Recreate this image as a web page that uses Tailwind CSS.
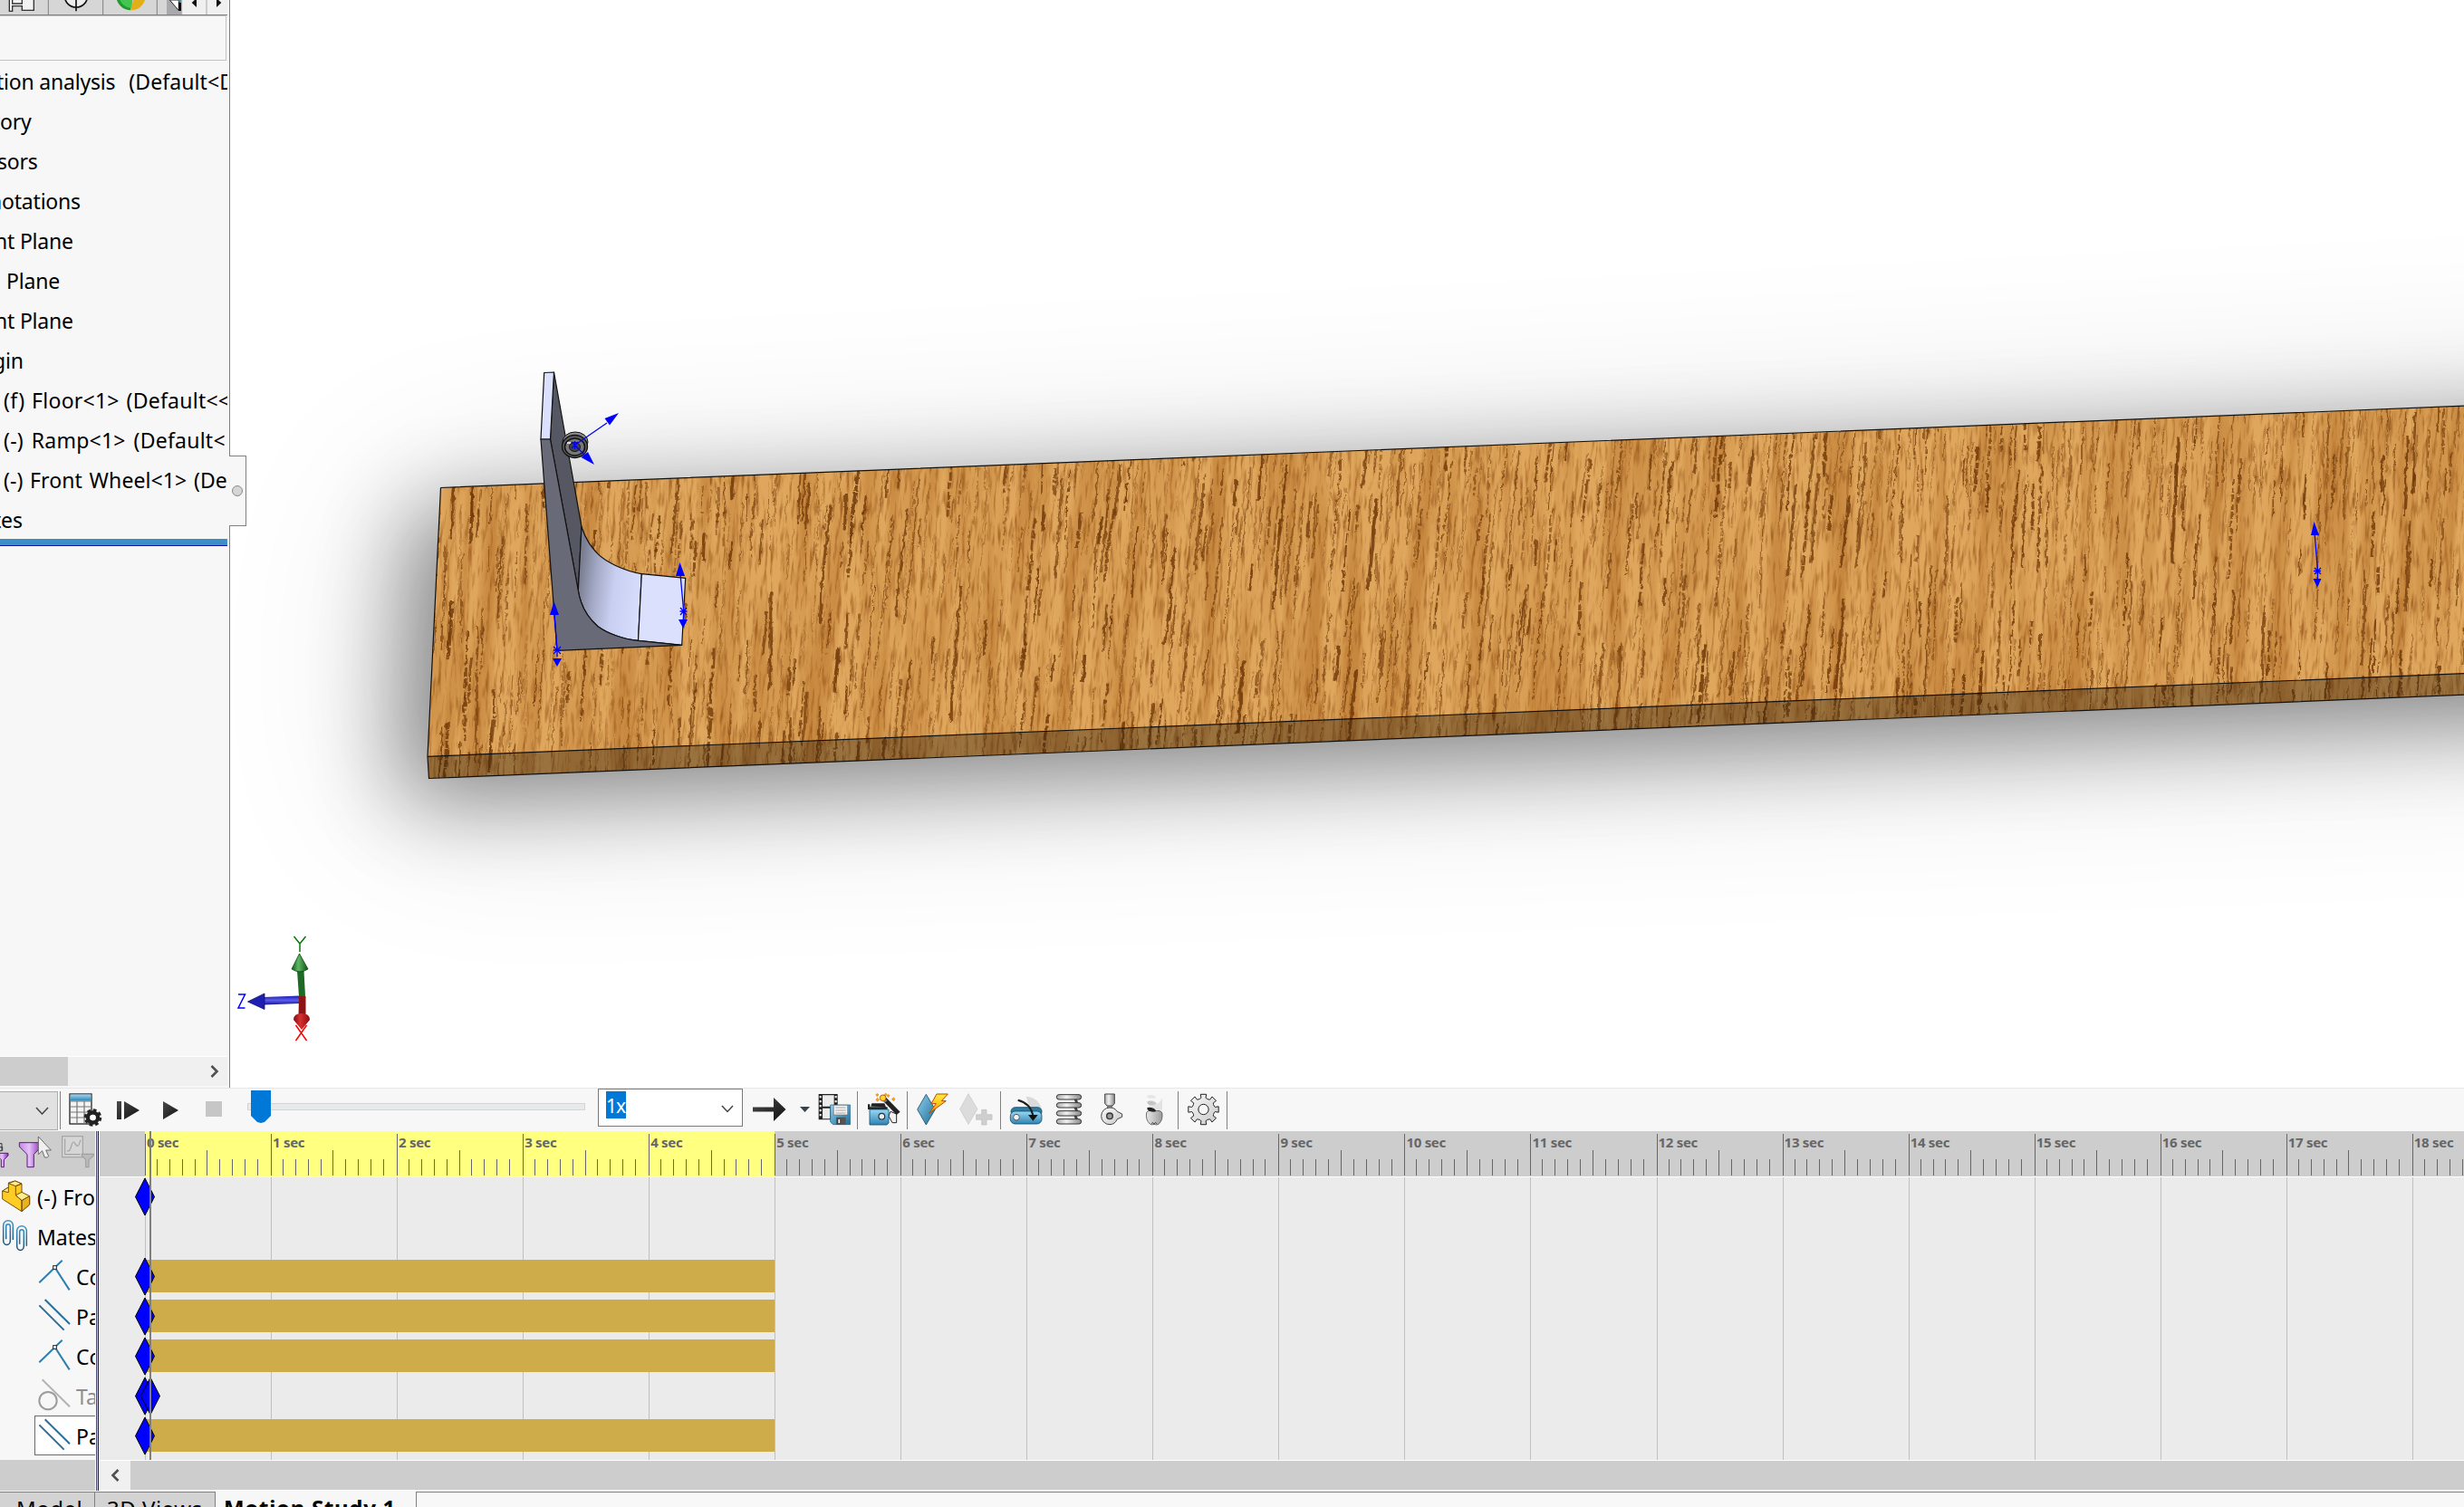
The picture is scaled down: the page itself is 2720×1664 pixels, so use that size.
<!DOCTYPE html>
<html lang="en">
<head>
<meta charset="utf-8">
<title>Motion Study</title>
<script src="https://cdn.jsdelivr.net/npm/@tailwindcss/browser@4"></script>
</head>
<body class="w-[2720px] h-[1664px] overflow-hidden bg-[#f7f7f7] text-black text-[24px] font-['Noto_Sans','Open_Sans',sans-serif] flex flex-col">

<!-- shared gradients -->
<svg class="absolute w-0 h-0" aria-hidden="true">
  <defs>
    <linearGradient id="gBlue" x1="0" y1="0" x2="1" y2="1"><stop offset="0" stop-color="#8fd0ee"/><stop offset="1" stop-color="#1f6d96"/></linearGradient>
    <linearGradient id="gBlueV" x1="0" y1="0" x2="0" y2="1"><stop offset="0" stop-color="#9ad8f4"/><stop offset="1" stop-color="#2d83b4"/></linearGradient>
    <linearGradient id="gDark" x1="0" y1="0" x2="1" y2="1"><stop offset="0" stop-color="#4a4a4a"/><stop offset="1" stop-color="#111"/></linearGradient>
    <linearGradient id="gMetal" x1="0" y1="0" x2="1" y2="0"><stop offset="0" stop-color="#aaa"/><stop offset=".4" stop-color="#f0f0f0"/><stop offset="1" stop-color="#888"/></linearGradient>
    <linearGradient id="gGear" x1="0" y1="0" x2="1" y2="1"><stop offset="0" stop-color="#fafafa"/><stop offset="1" stop-color="#c8c8c8"/></linearGradient>
    <linearGradient id="gPurple" x1="0" y1="0" x2="1" y2="0"><stop offset="0" stop-color="#c489e6"/><stop offset=".45" stop-color="#e6c2f7"/><stop offset="1" stop-color="#8a2fb4"/></linearGradient>
    <linearGradient id="gBolt" x1="0" y1="0" x2="0" y2="1"><stop offset="0" stop-color="#ffef3a"/><stop offset="1" stop-color="#ff9d00"/></linearGradient>
    <linearGradient id="gMate" x1="0" y1="0" x2="0" y2="1"><stop offset="0" stop-color="#3c95c6"/><stop offset="1" stop-color="#1f5173"/></linearGradient>
    <linearGradient id="gApple" x1="0" y1="0" x2="1" y2="0"><stop offset="0" stop-color="#e8e8e8"/><stop offset="1" stop-color="#9a9a9a"/></linearGradient>
  </defs>
</svg>

<!-- upper area -->
<div class="flex h-[1201px] shrink-0">
  <aside class="w-[254px] shrink-0 border-r border-[#808080] flex flex-col">
    <div class="h-[17px] w-[251px] shrink-0 overflow-hidden border-b border-[#808080] bg-[#d6d6d6]">
      <svg class="block" width="251" height="16" viewBox="0 0 753 48">
        <path d="M160 0V48M341 0V48M520 0V48" stroke="#808080" stroke-width="3"/>
        <path d="M31 -5V37H41V20H73V34H112V-5M41 -5V12H73V-5" fill="#f2f2f2" stroke="#333" stroke-width="4"/>
        <circle cx="252" cy="-14" r="38" fill="#eee" stroke="#111" stroke-width="5"/><path d="M252 -10V37" stroke="#111" stroke-width="5"/>
        <path d="M433 -15L385 -15A48 48 0 0 0 433 34Z" fill="#1f9a2e"/><path d="M445 -15L433 34A48 48 0 0 0 482 -15Z" fill="#e3ae17"/>
        <path d="M395 -15A40 40 0 0 0 436 26L440 -10Z" fill="#43c650"/>
        <rect x="552" y="0" width="48" height="48" fill="#a9a9ad"/><path d="M562 0L592 35V0Z" fill="#fff" stroke="#222" stroke-width="3"/><rect x="591" y="8" width="9" height="28" fill="#111"/><path d="M592 0h8v5h-8z" fill="#29a"/>
        <rect x="601" y="0" width="152" height="48" fill="#f0f0f0"/><path d="M602 0V48M684 0V48" stroke="#aaa" stroke-width="3"/>
        <path d="M635 9L651 -6V24ZM733 9L717 -6V24Z" fill="#111"/>
      </svg>
    </div>
    <div class="h-[50px] w-[250px] shrink-0 border-r border-b border-t border-[#c3c3c3]"></div>
    <ul class="w-[251px] h-[528px] shrink-0 overflow-hidden whitespace-nowrap text-[23px] leading-[46px] tracking-[-0.2px]">
      <li class="h-[44px] -ml-[4px]">tion analysis&nbsp;<span class="ml-[3px] tracking-[0.1px]">&nbsp;(Default&lt;Display</span></li>
      <li class="h-[44px] -ml-[8px]">tory</li>
      <li class="h-[44px] -ml-[3px]">sors</li>
      <li class="h-[44px] -ml-[12px]">notations</li>
      <li class="h-[44px] -ml-[6px]">nt Plane</li>
      <li class="h-[44px] ml-[7px]">Plane</li>
      <li class="h-[44px] -ml-[6px]">nt Plane</li>
      <li class="h-[44px] -ml-[8px]">gin</li>
      <li class="h-[44px] ml-[4px] tracking-[0.25px] [word-spacing:1.5px]">(f) Floor&lt;1&gt; (Default&lt;&lt;Default</li>
      <li class="h-[44px] ml-[4px] tracking-[0.25px] [word-spacing:2.5px]">(-) Ramp&lt;1&gt; (Default&lt;</li>
      <li class="h-[44px] ml-[4px] tracking-[0.1px] [word-spacing:1.5px]">(-) Front Wheel&lt;1&gt; (Default</li>
      <li class="h-[44px] -ml-[7px]">tes</li>
    </ul>
    <div class="h-[8px] w-[251px] shrink-0 bg-[#3a8fc8] border-b border-[#1414a0]"></div>
    <div class="mt-auto mb-[2px] h-[33px] w-[251px] shrink-0 bg-[#f0f0f0] border-t border-white flex items-center justify-between">
      <div class="h-full w-[75px] bg-[#cdcdcd]"></div>
      <svg class="mr-[9px]" width="10" height="14" viewBox="0 0 10 14"><path d="M1.5 1L7.5 7L1.5 13" fill="none" stroke="#505050" stroke-width="2.6"/></svg>
    </div>
  </aside>

  <main class="relative flex-1 bg-white">
    <svg class="block" width="2466" height="1201" viewBox="254 0 2466 1201">
      <defs>
        <filter id="blur1" filterUnits="userSpaceOnUse" x="0" y="0" width="3200" height="1201"><feGaussianBlur stdDeviation="50"/></filter>
        <filter id="blur2" filterUnits="userSpaceOnUse" x="0" y="0" width="3200" height="1201"><feGaussianBlur stdDeviation="100"/></filter>
        <filter id="bands" filterUnits="userSpaceOnUse" x="340" y="420" width="2490" height="460" color-interpolation-filters="sRGB">
          <feTurbulence type="fractalNoise" baseFrequency="0.045 0.003" numOctaves="3" seed="7"/>
          <feColorMatrix values="0 0 0 0 .7  0 0 0 0 .43  0 0 0 0 .15  3 0 0 0 -1.2"/>
        </filter>
        <filter id="fine" filterUnits="userSpaceOnUse" x="340" y="420" width="2490" height="460" color-interpolation-filters="sRGB">
          <feTurbulence type="fractalNoise" baseFrequency="0.3 0.035" numOctaves="3" seed="21"/>
          <feColorMatrix values="0 0 0 0 .58  0 0 0 0 .32  0 0 0 0 .09  3 0 0 0 -1.5"/>
        </filter>
        <filter id="rough" filterUnits="userSpaceOnUse" x="440" y="420" width="2290" height="460" color-interpolation-filters="sRGB">
          <feTurbulence type="fractalNoise" baseFrequency="0.2 0.12" numOctaves="2" seed="3"/>
          <feDisplacementMap in="SourceGraphic" scale="5" xChannelSelector="R" yChannelSelector="G"/>
        </filter>
        <clipPath id="board"><path d="M486.5 538.5L2725 448V767L473.5 859.5L472 835.3Z"/></clipPath>
        <linearGradient id="curve" gradientUnits="userSpaceOnUse" x1="638" y1="655" x2="708" y2="664"><stop offset="0" stop-color="#7b7f93"/><stop offset=".25" stop-color="#a4aac6"/><stop offset=".55" stop-color="#c8cff0"/><stop offset="1" stop-color="#d8defe"/></linearGradient>
        <linearGradient id="zAx" x1="0" y1="0" x2="0" y2="1"><stop offset="0" stop-color="#1c1caa"/><stop offset=".5" stop-color="#5b5bf0"/><stop offset="1" stop-color="#14148c"/></linearGradient>
        <linearGradient id="yAx" x1="0" y1="0" x2="1" y2="0"><stop offset="0" stop-color="#0f5a14"/><stop offset=".4" stop-color="#5fb866"/><stop offset="1" stop-color="#0e5213"/></linearGradient>
        <linearGradient id="xAx" x1="0" y1="0" x2="1" y2="0"><stop offset="0" stop-color="#7a1010"/><stop offset=".4" stop-color="#d93030"/><stop offset="1" stop-color="#8c0f0f"/></linearGradient>
      </defs>
      <path d="M440 545L3100 420V800L425 895Z" fill="#000" opacity=".12" filter="url(#blur2)"/>
      <path d="M456 564L3100 456V780L440 885Z" fill="#000" opacity=".43" filter="url(#blur1)"/>
      <g clip-path="url(#board)">
        <rect x="440" y="420" width="2290" height="460" fill="#dfa75d"/>
        <g transform="translate(30 0) skewX(-3)">
          <rect x="340" y="420" width="2490" height="460" filter="url(#bands)" opacity=".55"/>
          <rect x="340" y="420" width="2490" height="460" filter="url(#fine)" opacity=".7"/>
        </g>
        <g id="grain" fill="none" stroke="#6f3808" stroke-linecap="butt" filter="url(#rough)"></g>
        <path d="M472 835.3L2725 743.5V767L473.5 859.5Z" fill="#2a1c0c" opacity=".38"/>
      </g>
      <path d="M486.5 538.5L2725 448M2725 767L473.5 859.5L472 835.3L486.5 538.5M472 835.3L2725 743.5" fill="none" stroke="#111" stroke-width="1.2"/>

      <g stroke="#111" stroke-width="1.2" stroke-linejoin="round">
        <path d="M611.5 411L642 581.7L638.3 652L607.5 485Z" fill="#555863"/>
        <path d="M600.7 411.5L611.5 411L607.5 485L597 485Z" fill="#dbe1fd"/>
        <path d="M642 581.7C647 597 653 604 660 611.7C668 620 688 630 708.3 633.7L704.5 707.3C688 706 670 699 660 691.7C650 683 641 670 638.3 652Z" fill="url(#curve)"/>
        <path d="M708.3 633.7L756.7 638.3L752.7 712.3L704.5 707.3Z" fill="#dbe1fd"/>
        <path d="M597 485H607.5L638.3 652C641 670 650 683 660 691.7C670 699 688 706 704.5 707.3L752.7 712.3L615 718.3Z" fill="#686a78"/>
      </g>
      <g>
        <ellipse cx="635" cy="488" rx="14" ry="11" fill="#8b8b8b" stroke="#111"/>
        <ellipse cx="634.5" cy="493" rx="14" ry="12.5" fill="#5c5c5c" stroke="#111" stroke-width="1.3"/>
        <ellipse cx="634.5" cy="493.5" rx="11" ry="9.5" fill="#777" stroke="#111" stroke-width="1.5"/>
        <ellipse cx="634.5" cy="493.5" rx="6" ry="5" fill="#444" stroke="#111"/>
        <path d="M626 489h4" stroke="#fff" stroke-width="1.5"/>
      </g>
      <g stroke="#00f" fill="#00f" stroke-width="1.3">
        <path d="M634.5 491.5L670 467M634.5 491.5L648 505" fill="none"/>
        <path d="M683 456L667.5 462L673 469.5Z M656 513L641.5 505L649 499Z" stroke="none"/>
        <path d="M615 718L612 678M615 718V725M754.7 675L751 634M754.7 675V684M2558.5 630L2555 588M2558.5 630V640" fill="none"/>
        <path d="M611.5 664L607 679H617ZM610 727H620L615 736ZM750.5 621L746 636H756ZM749 684H759L754 693.5ZM2554.5 576L2551 591H2560ZM2553.500 639H2562.500L2558 648.500Z" stroke="none"/>
        <path d="M611 714l8 8M619 714l-8 8M611 718h8M631 488l7 7M638 488l-7 7M634.500 487v9M751 671l7 8M758 671l-7 8M750.500 675h8M2555 627l7 7M2562 627l-7 7M2554 630.500h8" fill="none"/>
      </g>

      <!-- orientation triad -->
      <path d="M291 1101L331 1099.500V1108L291 1109.500Z" fill="url(#zAx)"/>
      <path d="M273.500 1106L292 1097V1114.500Z" fill="#1f1fb4" stroke="#10106e" stroke-width=".8"/>
      <path d="M328 1072H335.500L337 1100H330Z" fill="#1d6a24"/>
      <path d="M330.500 1053L340 1070Q331 1076 322 1070Z" fill="url(#yAx)" stroke="#0b4410" stroke-width=".8"/>
      <path d="M330 1100H337.500V1122H329.500Z" fill="#8b1414"/>
      <path d="M324 1126Q324 1119 333 1119Q342 1119 342 1126L333 1137Z" fill="url(#xAx)"/>
      <path d="M324.500 1034L331 1042L337.500 1034M331 1042V1051" stroke="#0a7a0a" fill="none" stroke-width="1.500"/>
      <path d="M263 1098H270.500L263 1113H270.500" stroke="#00f" fill="none" stroke-width="1.500"/>
      <path d="M326.500 1132L338.500 1149M338.500 1132L326.500 1149" stroke="#f00" fill="none" stroke-width="1.500"/>
    </svg>
    <div class="absolute left-[-1px] top-[503px] w-[19px] h-[78px] bg-[#f7f7f7] border border-l-0 border-[#808080] flex items-center justify-center">
      <div class="w-[12px] h-[12px] rounded-full border border-[#8a8a8a] bg-[#d6d6d6]"></div>
    </div>
  </main>
</div>

<!-- motion toolbar -->
<div class="h-[48px] shrink-0 border-t border-[#e6e6f2] flex items-start">
  <div class="mt-[3px] w-[64px] h-[43px] bg-[#e1e1e1] border border-l-0 border-[#adadad] flex items-center justify-end pr-[9px]">
    <svg width="15" height="9" viewBox="0 0 15 9"><path d="M1 1L7.500 8L14 1" fill="none" stroke="#444" stroke-width="1.500"/></svg>
  </div>
  <div class="mt-[3px] ml-[2px] w-px h-[42px] bg-[#808080]"></div>
  <svg class="mt-[5px] ml-[9px]" width="38" height="38" viewBox="0 0 38 38">
    <rect x="1" y="1" width="24" height="33" fill="#f4f4f4" stroke="#222" stroke-width="1.300"/><rect x="1.500" y="1.500" width="23" height="7" fill="url(#gBlueV)"/>
    <path d="M1 9H25M1 15H25M1 21H25M1 27H25M9 9V34M17 9V34" stroke="#777" stroke-width="1.200"/>
    <circle cx="26.500" cy="27" r="5.500" fill="none" stroke="#222" stroke-width="4.500"/><circle cx="26.500" cy="27" r="8" fill="none" stroke="#222" stroke-width="3.500" stroke-dasharray="3.600 2.680"/><circle cx="26.500" cy="27" r="3.200" fill="#fff"/>
  </svg>
  <svg class="mt-[13px] ml-[15px]" width="26" height="22" viewBox="0 0 26 22"><path d="M0 1H5V21H0ZM8 1L25 11L8 21Z" fill="url(#gDark)"/></svg>
  <svg class="mt-[13px] ml-[25px]" width="18" height="22" viewBox="0 0 18 22"><path d="M0 1L17 11L0 21Z" fill="url(#gDark)"/></svg>
  <div class="mt-[14px] ml-[29px] w-[18px] h-[17px] bg-[#c6c6c6]"></div>
  <div class="relative mt-[16px] ml-[28px] w-[373px] h-[8px] border border-[#d3d5d5] bg-[#e7eaea]">
    <svg class="absolute left-[3px] -top-[15px]" width="23" height="37" viewBox="0 0 23 37"><path d="M0 0H22V28L15 35L11 36L7 35L0 28Z" fill="#0078d7"/></svg>
  </div>
  <div class="ml-[14px] w-[160px] h-[42px] bg-white border border-[#7a7a7a] flex items-start pl-[8px] pr-[9px] pt-[2px]">
    <span class="bg-[#0078d7] text-white w-[22px] h-[30px] leading-[32px] text-[21px] tracking-[-1px]">1x</span>
    <svg class="ml-auto mt-[15px]" width="14" height="9" viewBox="0 0 14 9"><path d="M1 1L7 7.500L13 1" fill="none" stroke="#444" stroke-width="1.500"/></svg>
  </div>
  <svg class="mt-[10px] ml-[11px]" width="37" height="26" viewBox="0 0 37 26"><path d="M0 10.500H23V0L36.500 13L23 26V15.500H0Z" fill="url(#gDark)"/></svg>
  <svg class="mt-[20px] ml-[15px]" width="11" height="6" viewBox="0 0 11 6"><path d="M0 0H11L5.500 6Z" fill="#37424a"/></svg>
  <svg class="mt-[5px] ml-[9px]" width="36" height="36" viewBox="190 34 108 108">
    <path d="M192 37H255V80H232V122H192Z" fill="#222"/><path d="M205 41H243V78H205ZM205 84H230V119H205Z" fill="#ececec"/><path d="M195 43h6v7h-6zM195 58h6v7h-6zM195 73h6v7h-6zM195 88h6v7h-6zM195 103h6v7h-6zM246 43h6v7h-6zM246 58h6v7h-6z" fill="#fff"/>
    <path d="M231 73H297V138H240L231 130Z" fill="url(#gBlue)" stroke="#1f5d80" stroke-width="2"/><path d="M242 74H288V106H242Z" fill="#f4f4f4" stroke="#555" stroke-width="1.500"/><path d="M248 82H282M248 91H282M248 100H282" stroke="#999" stroke-width="2.500"/><path d="M250 114H282V139H250Z" fill="#555"/><path d="M256 119H264V135H256Z" fill="#fff" stroke="#111" stroke-width="2"/>
  </svg>
  <div class="mt-[3px] ml-[7px] w-px h-[42px] bg-[#808080]"></div>
  <svg class="mt-[5px] ml-[10px]" width="37" height="36" viewBox="352 34 111 108">
    <path d="M355 71H362V80H420V88H355ZM365 78L368 68H410L415 80Z" fill="#222"/><path d="M430 95L450 103V132H436L424 110Z" fill="#f2f2f2" stroke="#222" stroke-width="3"/>
    <path d="M361 88H424V133L418 139H361Z" fill="url(#gBlueV)" stroke="#14506f" stroke-width="2.500"/><circle cx="401" cy="111" r="10" fill="#eee" stroke="#234" stroke-width="3.500"/>
    <path d="M398 52L410 43L462 96L450 106Z" fill="#222"/><path d="M402 55L410 49L420 59L411 66Z" fill="#777"/>
    <circle cx="405" cy="50" r="10" fill="#ffd92a" stroke="#d84b0e" stroke-width="3"/>
    <path d="M386 35l5 5-5 5-5-5zM414 34l5 5-5 5-5-5zM423 38l5 5-5 5-5-5zM440 48l6 6-6 6-6-6zM387 50l6 6-6 6-6-6z" fill="#f8a21a" stroke="#c1530e"/>
  </svg>
  <div class="mt-[3px] ml-[7px] w-px h-[42px] bg-[#808080]"></div>
  <svg class="mt-[5px] ml-[10px]" width="36" height="36" viewBox="518 33 108 108">
    <path d="M549 37L579 87L549 138L520 87Z" fill="url(#gBlue)" stroke="#1b4f6c" stroke-width="2.500"/>
    <path d="M584 36H621L600 59H615L559 100L582 68H566Z" fill="url(#gBolt)" stroke="#b8450c" stroke-width="3"/>
  </svg>
  <svg class="mt-[5px] ml-[11px]" width="37" height="36" viewBox="659 33 111 108">
    <path d="M689 35L719 86L689 136L661 86Z" fill="#dcdcdc" stroke="#c6c6c6" stroke-width="2"/>
    <path d="M733 88H749V104H767V121H749V138H733V121H715V104H733Z" fill="#cfcfcf" stroke="#bdbdbd" stroke-width="2"/>
  </svg>
  <div class="mt-[3px] ml-[8px] w-px h-[42px] bg-[#808080]"></div>
  <svg class="mt-[5px] ml-[9px]" width="37" height="36" viewBox="824 34 111 108">
    <path d="M880 45A55 55 0 0 1 933 110L900 110Z" fill="#dadada"/>
    <rect x="830" y="81" width="102" height="28" rx="14" fill="#2d7ba5" stroke="#174b69" stroke-width="2.500"/>
    <rect x="828" y="94" width="104" height="42" rx="16" fill="url(#gBlueV)" stroke="#174b69" stroke-width="2.500"/>
    <circle cx="848" cy="114" r="10" fill="#f4f4f4" stroke="#555" stroke-width="3"/>
    <path d="M853 57Q895 68 903 108" fill="none" stroke="#1c1c1c" stroke-width="6"/><path d="M887 106H919L903 126Z" fill="#111"/>
  </svg>
  <svg class="mt-[5px] ml-[14px]" width="30" height="36" viewBox="975 34 90 108">
    <path d="M1040 50L1046 66M1040 78L1046 94M1040 105L1046 122" stroke="#444" stroke-width="9"/>
    <g fill="url(#gMetal)" stroke="#333" stroke-width="3"><rect x="979" y="39" width="82" height="16" rx="8"/><rect x="979" y="66" width="82" height="16" rx="8"/><rect x="979" y="93" width="82" height="16" rx="8"/><rect x="979" y="120" width="82" height="16" rx="8"/></g>
  </svg>
  <svg class="mt-[5px] ml-[19px]" width="26" height="36" viewBox="1122 34 78 108">
    <path d="M1148 70H1162V88H1148Z" fill="#999" stroke="#444" stroke-width="2"/><path d="M1139 37H1171V68L1164 76H1146L1139 68Z" fill="url(#gMetal)" stroke="#444" stroke-width="3"/>
    <path d="M1155 82Q1172 82 1180 95L1196 103V113L1180 120Q1172 138 1155 138A28 28 0 0 1 1155 82Z" fill="url(#gGear)" stroke="#444" stroke-width="3"/><circle cx="1155" cy="110" r="10" fill="#999" stroke="#333" stroke-width="4"/>
  </svg>
  <svg class="mt-[5px] ml-[23px]" width="22" height="36" viewBox="1268 34 66 108">
    <path d="M1278 42Q1300 36 1308 50Q1290 54 1278 48Z" fill="#e6e6e6"/><path d="M1280 60Q1300 54 1312 70Q1325 60 1328 50V90H1290Z" fill="#e2e2e2"/><path d="M1278 62Q1298 56 1308 70Q1290 78 1280 70Z" fill="#c4c4c4"/>
    <path d="M1276 98Q1284 88 1301 95Q1318 88 1327 98Q1332 122 1316 137Q1308 141 1301 137Q1293 141 1287 136Q1272 122 1276 98Z" fill="url(#gApple)" stroke="#555" stroke-width="2.500"/><path d="M1278 82Q1298 78 1308 93Q1290 100 1279 89Z" fill="#222"/>
    <path d="M1293 136l3-5 5 5 5-5 4 5" stroke="#333" stroke-width="2.500" fill="none"/>
  </svg>
  <div class="mt-[3px] ml-[15px] w-px h-[42px] bg-[#808080]"></div>
  <svg class="mt-[5px] ml-[9px]" width="37" height="37" viewBox="-55.500 -54 111 111">
    <path id="gear" fill="url(#gGear)" stroke="#222" stroke-width="3" stroke-linejoin="round"/>
    <circle r="17" fill="#f7f7f7" stroke="#222" stroke-width="3"/>
  </svg>
  <div class="mt-[3px] ml-[7px] w-px h-[42px] bg-[#808080]"></div>
</div>

<!-- timeline -->
<div class="flex h-[397px] shrink-0">
  <div class="w-[105px] shrink-0 flex flex-col overflow-hidden">
    <div class="h-[50px] shrink-0 bg-[#cdcdcd]">
      <svg class="block" width="105" height="50" viewBox="0 27 315 150">
        <path d="M-10 100H27V108L13 122V146H4V122L-10 108Z" fill="url(#gPurple)" stroke="#5d1880" stroke-width="3"/><path d="M0 68H6V92H0M0 80H8V92" fill="none" stroke="#333" stroke-width="3"/>
        <path d="M64 65H137V78L112 104V146H90V104L64 78Z" fill="url(#gPurple)" stroke="#5d1880" stroke-width="3"/>
        <path d="M127 45V104L140 92L148 114H157L161 110L152 90H169Z" fill="#f0f0f0" stroke="#555" stroke-width="2.500"/>
        <g fill="none" stroke="#a3a3a3" stroke-width="3.500"><rect x="206" y="44" width="68" height="69" fill="#d6d6d6"/><path d="M215 52V104H266M222 92C232 96 234 84 238 70C246 50 250 80 258 76C266 70 262 60 268 56"/><path d="M271 103H310V108L294 122V146H284V122L271 108Z" fill="#bbb" stroke="#a0a0a0"/></g>
      </svg>
    </div>
    <ul class="h-[313px] shrink-0 whitespace-nowrap text-[23px] leading-[46px]">
      <li class="h-[44px] flex"><svg class="mt-[3px] shrink-0" width="42" height="38" viewBox="0 186 126 114"><g stroke="#7a4f08" stroke-width="3" stroke-linejoin="round"><path d="M8 225L28 213L28 198L50 192L72 201V232L98 244V270L72 293L8 252Z" fill="#ffcb25"/><path d="M28 200L50 192L72 201L52 209ZM52 239L72 229L98 242L72 257Z" fill="#ffec8c"/><path d="M72 257L98 242V270L72 293Z" fill="#e8b31f"/><path d="M52 209V239L72 257V293M52 209L72 201" fill="none"/><path d="M8 225L28 213V230Z" fill="#ffec8c"/></g></svg><span class="-ml-px tracking-[0.300px]">(-) Fro</span></li>
      <li class="h-[44px] flex"><svg class="mt-[2px] shrink-0" width="42" height="40" viewBox="0 318 126 120"><g fill="none" stroke="url(#gMate)" stroke-width="4.500"><path d="M43 390V342A16 16 0 0 0 11 342V392A11 14 0 0 0 34 392V346A7 8 0 0 0 20 346V388"/><path d="M88 410V360A16 16 0 0 0 56 360V410A11 14 0 0 0 79 410V364A7 8 0 0 0 65 364V404"/></g></svg><span class="-ml-px">Mates</span></li>
      <li class="h-[44px] flex"><svg class="ml-[40px] mt-[2px] shrink-0" width="44" height="40" viewBox="120 450 132 120"><path d="M130 532L206 458M182 482L230 556" stroke="#2f7fae" stroke-width="6" fill="none"/><rect x="176" y="476" width="11" height="11" fill="#fff" stroke="#222" stroke-width="3"/></svg><span>Coincident</span></li>
      <li class="h-[44px] flex"><svg class="ml-[40px] mt-[2px] shrink-0" width="44" height="40" viewBox="120 582 132 120"><path d="M149 588L231 669M130 607L212 689" stroke="#286f9b" stroke-width="6" fill="none"/></svg><span>Parallel</span></li>
      <li class="h-[44px] flex"><svg class="ml-[40px] mt-[2px] shrink-0" width="44" height="40" viewBox="120 450 132 120"><path d="M130 532L206 458M182 482L230 556" stroke="#2f7fae" stroke-width="6" fill="none"/><rect x="176" y="476" width="11" height="11" fill="#fff" stroke="#222" stroke-width="3"/></svg><span>Coincident</span></li>
      <li class="h-[44px] flex text-[#8e8e8e]"><svg class="ml-[40px] mt-[2px] shrink-0" width="44" height="40" viewBox="120 846 132 120"><path d="M140 853L231 943" stroke="#b2b2b2" stroke-width="6"/><circle cx="159" cy="923" r="29" fill="none" stroke="#9c9c9c" stroke-width="6"/></svg><span>Tangent</span></li>
      <li class="h-[44px] ml-[38px] bg-white border border-r-0 border-[#6a6a6a] flex leading-[44px]"><svg class="ml-px mt-[1px] shrink-0" width="44" height="40" viewBox="120 978 132 120"><path d="M149 985L231 1066M130 1003L212 1085" stroke="#286f9b" stroke-width="6" fill="none"/></svg><span>Parallel</span></li>
    </ul>
    <div class="h-[34px] shrink-0 bg-[#cdcdcd]"></div>
  </div>
  <div class="w-[5px] shrink-0 bg-white flex"><div class="ml-px w-px bg-[#4c4c70]"></div><div class="w-px bg-[#c9c9de]"></div><div class="w-px bg-[#1f1f38]"></div></div>

  <div class="flex-1 flex flex-col min-w-0">
    <div class="relative h-[363px] shrink-0 flex flex-col overflow-hidden">
      <div class="h-[50px] shrink-0 bg-[#cdcdcd] flex">
        <div class="ml-[50px] w-[695px] bg-[#ffff80]"></div>
      </div>
      <div class="flex-1 border-t border-white bg-[#ebebeb]"></div>
      <svg id="ticks" class="absolute left-0 top-0" width="2610" height="363" shape-rendering="crispEdges"></svg>
      <div id="labels" class="absolute left-[52px] top-px flex w-[2700px] whitespace-nowrap text-[15px] leading-[22px] font-bold text-[#666] tracking-[-0.300px]"></div>
      <div id="bars" class="absolute left-[50px] top-[50px] w-[695px] flex flex-col"></div>
      <svg id="keys" class="absolute left-0 top-0" width="80" height="363"></svg>
    </div>
    <div class="h-[34px] shrink-0 border-t border-b border-white bg-[#cdcdcd] flex">
      <div class="w-[34px] bg-[#f0f0f0] flex items-center justify-center"><svg width="10" height="14" viewBox="0 0 10 14"><path d="M8.500 1L2.500 7L8.500 13" fill="none" stroke="#505050" stroke-width="2.600"/></svg></div>
    </div>
  </div>
</div>

<!-- study tabs -->
<div class="mt-px flex h-[17px] shrink-0 overflow-hidden text-[24px] leading-[36px] whitespace-nowrap">
  <div class="w-[105px] h-[30px] border-t border-r border-[#808080] bg-[#d3d3d3] pl-[18px] tracking-[0.500px]">Model</div>
  <div class="w-[133px] h-[30px] border-t border-r border-[#808080] bg-[#d3d3d3] pl-[13px] tracking-[0.500px]">3D Views</div>
  <div class="w-[221px] h-[30px] pl-[9px] font-bold tracking-[0.700px]">Motion Study 1</div>
  <div class="flex-1 h-[30px] border-t border-l border-[#808080] bg-[#f8f8f8]"></div>
</div>

<script>
// deterministic random numbers keep the grain stable between loads
let s = 12345;
const rnd = () => ((s = (s * 1664525 + 1013904223) >>> 0) / 4294967296);

// wood grain: long thin veins, each broken into several dark pores
let g = '';
for (let i = 0; i < 520; i++) {
  const x0 = 450 + (i + rnd()) * 4.45;
  const top = 538 - (x0 - 486) * 0.0405;
  const lean = -0.045 - (x0 > 900 && x0 < 2100 ? 0.05 : 0);
  const tone = rnd();
  let y = top - 40 + rnd() * 120, drift = 0;
  const stop = top + 340;
  while (y < stop) {
    const len = 20 + rnd() * rnd() * 150;
    let x = x0 + (y - top) * lean + drift + (rnd() - 0.5) * 6;
    let d = `M${x.toFixed(1)} ${y.toFixed(1)}`;
    for (let t = 0; t < len; t += 10) { y += 10; x += lean * 10 + (rnd() - 0.5) * 1.8; d += `L${x.toFixed(1)} ${y.toFixed(1)}`; }
    const w = (0.8 + tone * rnd() * 3).toFixed(1), o = (0.3 + tone * 0.55).toFixed(2);
    const dash = rnd() < 0.5 ? ` stroke-dasharray="${(5 + rnd() * 22).toFixed(0)} ${(1 + rnd() * 3).toFixed(0)} ${(3 + rnd() * 9).toFixed(0)} ${(1 + rnd() * 2).toFixed(0)}"` : '';
    g += `<path d="${d}" stroke-width="${w}" opacity="${o}"${dash}/>`;
    y += 20 + rnd() * 190;
    drift += (rnd() - 0.5) * 4;
  }
}
document.getElementById('grain').innerHTML = g;

// gear outline
let gd = '';
for (let i = 0; i < 8; i++) {
  const a = i * Math.PI / 4 - Math.PI / 2;
  [[-0.32, 37], [-0.20, 39], [-0.19, 51], [0.19, 51], [0.20, 39], [0.32, 37]].forEach(([o, r], k) => {
    gd += (i || k ? 'L' : 'M') + (Math.cos(a + o) * r).toFixed(1) + ' ' + (Math.sin(a + o) * r).toFixed(1);
  });
}
document.getElementById('gear').setAttribute('d', gd + 'Z');

// ruler ticks, second lines and labels
const SEC = 139.06;
let t = '', l = '';
for (let n = 0; n < 19; n++) {
  const x = Math.floor(50.3 + n * SEC);
  t += `<rect x="${x}" y="51" width="1" height="312" fill="#c0c0c0"/><rect x="${x}" y="3" width="1" height="46" fill="#666"/>`;
  for (let k = 1; k < 10; k++) {
    const m = Math.floor(50 + n * SEC + k * 13.9 - 0.6), y = k === 5 ? 21 : 31;
    t += `<rect x="${m}" y="${y}" width="1" height="${49 - y}" fill="#666"/>`;
  }
  l += `<span class="w-[139.060px] shrink-0">${n} sec</span>`;
}
document.getElementById('ticks').innerHTML = t;
document.getElementById('labels').innerHTML = l;

// tracks
document.getElementById('bars').innerHTML = [0, 0, 1, 1, 1, 0, 1]
  .map(on => `<div class="h-[44px] pt-[4px]">${on ? '<div class="h-[36px] bg-[#ceac4a]"></div>' : ''}</div>`).join('');

// key points and the current time line
const key = (x, y) => `<path d="M${x} ${y - 20.5}L${x + 10.5} ${y}L${x} ${y + 20.5}L${x - 10.5} ${y}Z" fill="#00f" stroke="#000"/>`;
let k = [0, 2, 3, 4, 5, 6].map(r => key(50, 72.5 + r * 44)).join('');
k += key(56, 72.5 + 5 * 44) + '<rect x="55" y="0" width="2" height="363" fill="#7f7f7f"/>';
document.getElementById('keys').innerHTML = k;
</script>
</body>
</html>
